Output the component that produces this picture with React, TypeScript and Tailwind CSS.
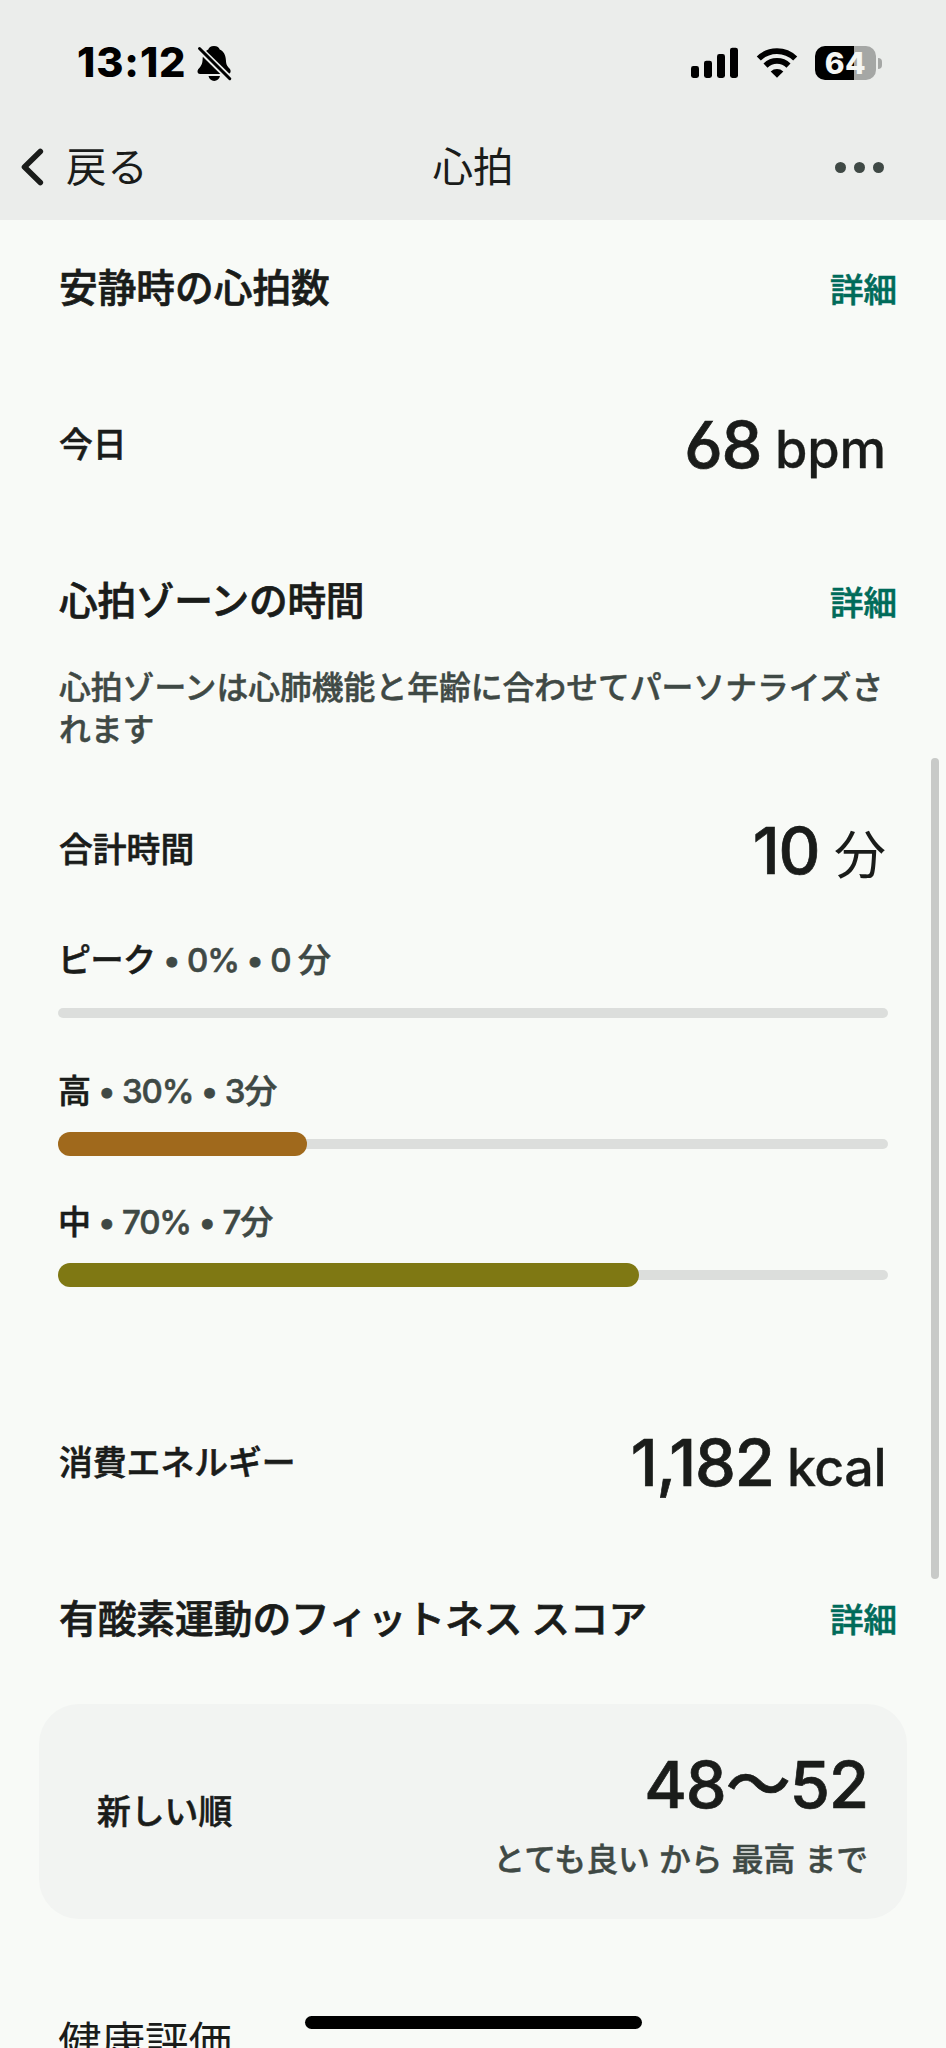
import type { ReactNode } from "react";

const NUM = "font-['Inter','Noto_Sans_CJK_JP',sans-serif] [font-feature-settings:'cv03','cv04']";
const JP = "font-['Noto_Sans_CJK_JP',sans-serif]";

function BellOff() {
  return (
    <svg width="36" height="38" viewBox="196 44 36 38" className="block">
      <path
        d="M214 46c3.300 0 5.300 1.600 5.700 3.500 4.300 1.800 6 6 6.200 10.500.200 5 1.600 6.500 4 9 1.300 1.700 1 5-1.900 5H200c-2.800 0-3-3.300-1.600-5 2.800-3 4-5 4.200-9.500.200-4.500 1.800-8.200 5.700-10 .4-1.900 2.400-3.500 5.700-3.500z"
        fill="#000"
      />
      <path d="M208.500 76h11.500c-.6 3-3 4.900-5.800 4.900s-5.200-1.900-5.700-4.900z" fill="#000" />
      <path d="M199 48.500 230 79" stroke="#ebedeb" strokeWidth="6.600" />
      <path d="M199.500 48.500 229.800 78.700" stroke="#000" strokeWidth="3" strokeLinecap="round" />
    </svg>
  );
}

function Signal() {
  return (
    <svg width="48" height="32" viewBox="692 47 48 32" className="block">
      <rect x="692" y="66" width="8" height="12" rx="2.400" />
      <rect x="705" y="60.700" width="8" height="17.300" rx="2.400" />
      <rect x="718" y="54" width="8" height="24" rx="2.400" />
      <rect x="731" y="47.700" width="8" height="30.300" rx="2.400" />
    </svg>
  );
}

function Wifi() {
  return (
    <svg width="42" height="32" viewBox="756.500 47 42 32" className="block">
      <g fill="none" stroke="#000" strokeWidth="5.800">
        <path d="M759.300 58.500a26 26 0 0 1 36.400 0" />
        <path d="M766 65.600a16.500 16.500 0 0 1 23 0" />
      </g>
      <path d="M777.500 77.800l-6.300-6.400a9.200 9.200 0 0 1 12.600 0z" />
    </svg>
  );
}

function Battery() {
  return (
    <div className="flex items-center">
      <div className="flex h-[34px] w-[61px] items-center justify-center rounded-[10px] bg-[linear-gradient(to_right,#000_64%,#a5a7a5_64%)]">
        <span className="font-['Inter',sans-serif] text-[30px] leading-none font-extrabold tracking-[0.5px] text-[#f4f6f4]">
          64
        </span>
      </div>
      <div className="ml-[2px] h-[11px] w-[4px] rounded-r-full bg-[#a5a7a5]" />
    </div>
  );
}

function SectionHeading({ title, className, tight }: { title: string; className: string; tight?: boolean }) {
  return (
    <div className={`flex items-center justify-between pr-[49px] pl-[59px] ${className}`}>
      <h2
        className={`${JP} pb-[4px] text-[38.700px] leading-none font-medium text-[#1a1c1a] [-webkit-text-stroke:0.7px_#1a1c1a] ${tight ? "tracking-[-0.3px]" : ""}`}
      >
        {title}
      </h2>
      <a className={`${JP} text-[33.500px] leading-none font-medium text-[#006b5a] [-webkit-text-stroke:0.6px_#006b5a]`}>詳細</a>
    </div>
  );
}

function RowLabel({ children }: { children: ReactNode }) {
  return (
    <span className={`${JP} pb-[4px] text-[33.800px] leading-none font-medium text-[#1a1c1a] [-webkit-text-stroke:0.6px_#1a1c1a]`}>
      {children}
    </span>
  );
}

function MetricRow({ label, className, children }: { label: string; className: string; children: ReactNode }) {
  return (
    <div className={`flex items-center justify-between pr-[60px] pl-[59px] ${className}`}>
      <RowLabel>{label}</RowLabel>
      <span
        className={`${NUM} text-[65px] leading-none font-medium tracking-[-1.200px] whitespace-pre text-[#1a1c1a] [-webkit-text-stroke:0.7px_#1a1c1a]`}
      >
        {children}
      </span>
    </div>
  );
}

const zones = [
  { name: "ピーク", detail: " • 0% • 0 分", percent: 0, color: "bg-[#a0691c]" },
  { name: "高", detail: " • 30% • 3分", percent: 30, color: "bg-[#a0691c]" },
  { name: "中", detail: " • 70% • 7分", percent: 70, color: "bg-[#7f7813]" },
];

export default function App() {
  return (
    <div className="relative h-[2048px] w-[946px] overflow-hidden bg-[#f8faf7]">
      <header className="h-[220px] bg-[#ebedeb]">
        <div className="flex h-[126px] items-center justify-between pr-[64px] pl-[77px]">
          <div className="flex items-center gap-[10px]">
            <span className="w-[109px] font-['Inter',sans-serif] text-[41.500px] leading-none font-extrabold tracking-[0.9px] text-black">
              13:12
            </span>
            <BellOff />
          </div>
          <div className="flex items-center gap-[17px]">
            <Signal />
            <Wifi />
            <Battery />
          </div>
        </div>
        <div className={`${JP} grid h-[82px] grid-cols-3 items-center text-[40.500px] leading-none text-[#1a1c1a]`}>
          <div className="flex items-center gap-[20px] pl-[20px]">
            <svg width="26" height="40" viewBox="20 147 26 40" fill="none" className="block">
              <path d="M40.300 151.500 24.500 167l15.800 15.500" stroke="#1a1c1a" strokeWidth="5.600" strokeLinecap="round" strokeLinejoin="round" />
            </svg>
            <span className="pb-[4px] tracking-[0.8px]">戻る</span>
          </div>
          <h1 className="pb-[4px] text-center">心拍</h1>
          <div className="flex justify-end gap-[8px] pr-[62px]">
            <i className="size-[11px] rounded-full bg-[#3f4945]" />
            <i className="size-[11px] rounded-full bg-[#3f4945]" />
            <i className="size-[11px] rounded-full bg-[#3f4945]" />
          </div>
        </div>
      </header>

      <main>
        <SectionHeading title="安静時の心拍数" className="h-[135px]" />
        <MetricRow label="今日" className="h-[179px]">
          68<span className="text-[52.500px] tracking-[-0.2px] [-webkit-text-stroke:0.3px_#1a1c1a]"> bpm</span>
        </MetricRow>

        <SectionHeading title="心拍ゾーンの時間" className="h-[133px]" tight />
        <p
          className={`${JP} -mt-[2px] pr-[40px] pl-[59px] text-[31.800px] leading-[41.500px] font-medium text-[#3f4945] [-webkit-text-stroke:0.5px_#3f4945]`}
        >
          心拍ゾーンは心肺機能と年齢に合わせてパーソナライズさ
          <br />
          れます
        </p>
        <MetricRow label="合計時間" className="mt-[13px] h-[178px]">
          10<span className="text-[52px] font-normal tracking-normal [-webkit-text-stroke:0px]"> 分</span>
        </MetricRow>

        <div className="flex flex-col gap-[45px] px-[58px]">
          {zones.map((zone) => (
            <div key={zone.name}>
              <div className={`${NUM} h-[42px] text-[33px] leading-[42px] font-medium whitespace-pre text-[#1a1c1a]`}>
                <span className="tracking-[-0.5px] [-webkit-text-stroke:0.6px_#1a1c1a]">{zone.name}</span>
                <span className="tracking-[-1.200px] text-[#3f4945] [-webkit-text-stroke:0.6px_#3f4945]">{zone.detail}</span>
              </div>
              <div className="mt-[20px] grid h-[24px] items-center">
                <div className="col-start-1 row-start-1 h-[10px] rounded-full bg-[#dcdedc]" />
                <div
                  className={`col-start-1 row-start-1 h-[24px] rounded-full ${zone.color}`}
                  style={{ width: `${zone.percent}%` }}
                />
              </div>
            </div>
          ))}
        </div>

        <MetricRow label="消費エネルギー" className="mt-[89px] h-[173px]">
          1,182<span className="text-[52px] tracking-[-0.5px] [-webkit-text-stroke:0.3px_#1a1c1a]"> kcal</span>
        </MetricRow>

        <SectionHeading title="有酸素運動のフィットネス スコア" className="h-[138px]" />
        <section className="mx-[39px] mt-[17px] flex h-[215px] items-center justify-between rounded-[40px] bg-[#f2f4f2] pr-[39px] pl-[58px]">
          <RowLabel>新しい順</RowLabel>
          <div className="flex flex-col items-end gap-[25px] pt-[3px]">
            <span
              className={`${NUM} text-[65px] leading-none font-medium tracking-[-1px] text-[#1a1c1a] [-webkit-text-stroke:0.7px_#1a1c1a]`}
            >
              48〜52
            </span>
            <span
              className={`${JP} text-[31.800px] leading-none font-medium [word-spacing:2px] text-[#3f4945] [-webkit-text-stroke:0.5px_#3f4945]`}
            >
              とても良い から 最高 まで
            </span>
          </div>
        </section>
        <h2 className={`${JP} mt-[99px] pl-[58px] text-[43.500px] leading-none text-[#1a1c1a]`}>健康評価</h2>
      </main>

      <div className="absolute top-[758px] right-[7px] h-[821px] w-[8px] rounded-full bg-[#c8cac8]" />
      <div className="absolute top-[2016px] left-[305px] h-[13px] w-[337px] rounded-full bg-black" />
    </div>
  );
}
